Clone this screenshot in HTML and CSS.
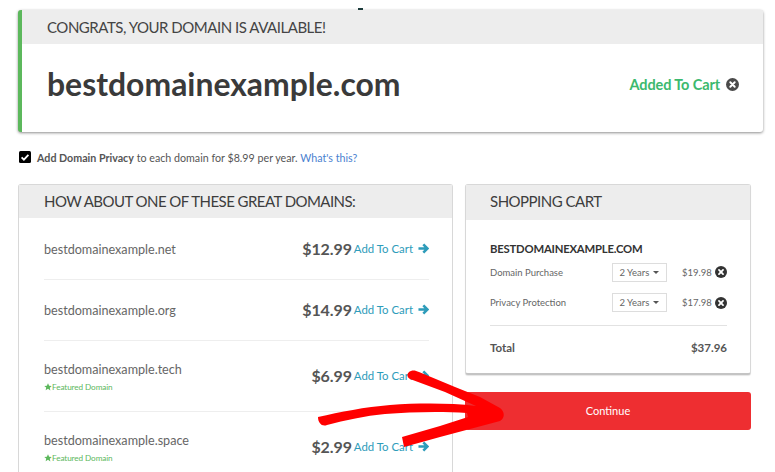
FILE: index.html
```html
<!DOCTYPE html>
<html lang="en">
<head>
<meta charset="utf-8">
<title>Domain available</title>
<link rel="stylesheet" href="styles.css">
</head>
<body>
<main class="page">
  <span class="speck"></span>
  <section class="result">
    <h2 class="result-head">CONGRATS, YOUR DOMAIN IS AVAILABLE!</h2>
    <div class="result-body">
      <h1 class="result-name">bestdomainexample.com</h1>
      <div class="added">Added To Cart
        <svg class="x-icon x-large" viewBox="0 0 16 16"><circle cx="8" cy="8" r="8" fill="#4a4a4a"/><path d="M5.3 5.3l5.4 5.4M10.7 5.3l-5.4 5.4" stroke="#fff" stroke-width="2.4" stroke-linecap="round"/></svg>
      </div>
    </div>
  </section>

  <label class="privacy">
    <svg class="check" viewBox="0 0 12 12"><rect width="12" height="12" rx="1.5" fill="#000"/><path d="M2.6 6.4l2.3 2.3 4.5-4.8" fill="none" stroke="#fff" stroke-width="1.8"/></svg>
    <span><b>Add Domain Privacy</b> to each domain for $8.99 per year. <a class="link">What's this?</a></span>
  </label>

  <div class="columns">
    <section class="panel suggestions">
      <h2 class="panel-head">HOW ABOUT ONE OF THESE GREAT DOMAINS:</h2>
      <ul class="domain-list">
        <li class="domain">
          <div class="domain-name">bestdomainexample.net</div>
          <div class="price">$12.99</div>
          <a class="add">Add To Cart <svg class="arrow" viewBox="0 0 12 12"><path d="M.5 6h9.500M5.800 1.600L10.200 6l-4.400 4.400" fill="none" stroke="#2e9cba" stroke-width="2.800"/></svg></a>
        </li>
        <li class="domain">
          <div class="domain-name">bestdomainexample.org</div>
          <div class="price">$14.99</div>
          <a class="add">Add To Cart <svg class="arrow" viewBox="0 0 12 12"><path d="M.5 6h9.500M5.800 1.600L10.200 6l-4.400 4.400" fill="none" stroke="#2e9cba" stroke-width="2.800"/></svg></a>
        </li>
        <li class="domain featured">
          <div class="domain-name">bestdomainexample.tech
            <div class="feat"><svg class="star" viewBox="0 0 12 12"><path d="M6 .5l1.700 3.600 3.900.5-2.900 2.700.8 3.900L6 8.800l-3.500 1.900.8-3.900L.4 4.600l3.900-.5z" fill="#5cb85c"/></svg>Featured Domain</div>
          </div>
          <div class="price">$6.99</div>
          <a class="add">Add To Cart <svg class="arrow" viewBox="0 0 12 12"><path d="M.5 6h9.500M5.800 1.600L10.200 6l-4.400 4.400" fill="none" stroke="#2e9cba" stroke-width="2.800"/></svg></a>
        </li>
        <li class="domain featured">
          <div class="domain-name">bestdomainexample.space
            <div class="feat"><svg class="star" viewBox="0 0 12 12"><path d="M6 .5l1.700 3.600 3.900.5-2.900 2.700.8 3.900L6 8.800l-3.500 1.900.8-3.900L.4 4.600l3.900-.5z" fill="#5cb85c"/></svg>Featured Domain</div>
          </div>
          <div class="price">$2.99</div>
          <a class="add">Add To Cart <svg class="arrow" viewBox="0 0 12 12"><path d="M.5 6h9.500M5.800 1.600L10.200 6l-4.400 4.400" fill="none" stroke="#2e9cba" stroke-width="2.800"/></svg></a>
        </li>
      </ul>
    </section>

    <aside class="side">
      <section class="panel cart">
        <h2 class="panel-head cart-head">SHOPPING CART</h2>
        <div class="cart-body">
          <h3 class="cart-domain">BESTDOMAINEXAMPLE.COM</h3>
          <div class="line">
            <span class="line-label">Domain Purchase</span>
            <span class="select">2 Years <i class="caret"></i></span>
            <span class="line-price">$19.98</span>
            <svg class="x-icon" viewBox="0 0 16 16"><circle cx="8" cy="8" r="8" fill="#333"/><path d="M5.300 5.300l5.400 5.400M10.700 5.300l-5.400 5.400" stroke="#fff" stroke-width="2.400" stroke-linecap="round"/></svg>
          </div>
          <div class="line">
            <span class="line-label">Privacy Protection</span>
            <span class="select">2 Years <i class="caret"></i></span>
            <span class="line-price">$17.98</span>
            <svg class="x-icon" viewBox="0 0 16 16"><circle cx="8" cy="8" r="8" fill="#333"/><path d="M5.300 5.300l5.400 5.400M10.700 5.300l-5.400 5.400" stroke="#fff" stroke-width="2.400" stroke-linecap="round"/></svg>
          </div>
          <div class="total"><span>Total</span><span>$37.96</span></div>
        </div>
      </section>
      <button class="continue" type="button">Continue</button>
    </aside>
  </div>

  <svg class="scribble" viewBox="0 0 775 472">
    <path fill="#f00" d="M318 417C340 412 365 407 390 405C420 403 450 403 476 406L445 392L410 379C406 377 407 372 411 371C414 370 416 371 419 372L455 387L480 397L500 408C505 412 505 418 500 421L470 429L440 437L404 447L402 437L440 426L468 417L467 413C440 411 410 412 385 414C365 416 345 420 327 425C322 427 318 423 318 417Z"/>
  </svg>
</main>
</body>
</html>
```
FILE: styles.css
```css
* { box-sizing: border-box; }
html, body { margin: 0; padding: 0; background: #fff; }
body { width: 775px; height: 472px; overflow: hidden; font-family: Lato, "Open Sans", sans-serif; color: #444; }
.page { position: relative; width: 775px; height: 472px; overflow: hidden; padding: 10px 12px 0 18px; }
.speck { position: absolute; left: 358px; top: 8px; width: 5px; height: 2px; background: #1c3b3b; }
h1, h2, h3 { margin: 0; font-weight: 400; }
ul { list-style: none; margin: 0; padding: 0; }

.result { border-left: 4px solid #5cb85c; border-radius: 3px; box-shadow: 0 1px 3px rgba(0,0,0,.45); height: 122px; background: #fff; }
.result-head { background: #ededed; height: 34px; line-height: 34px; padding-left: 25px; font-size: 15px; color: #444; letter-spacing: -.47px; }
.result-body { display: flex; align-items: center; justify-content: space-between; height: 88px; padding: 0 24px 0 25px; }
.result-name { font-size: 31.9px; font-weight: 700; color: #3a3a3a; position: relative; top: -4px; }
.added { display: flex; align-items: center; gap: 6px; color: #3cb96e; font-size: 14.5px; font-weight: 700; letter-spacing: -.12px; position: relative; top: -4px; }
.x-icon { width: 12px; height: 12px; flex: none; }
.x-large { width: 13px; height: 13px; }

.privacy { display: flex; align-items: center; gap: 6px; height: 16px; margin: 17px 0 0 1px; font-size: 10.7px; color: #555; }
.check { width: 12px; height: 12px; flex: none; }
.privacy b { font-weight: 700; color: #555; }
.link { color: #4a7fd0; }

.columns { display: grid; grid-template-columns: 435px 286px; column-gap: 12px; margin-top: 19px; align-items: start; }
.panel { background: #fff; border: 1px solid #d8d8d8; border-radius: 3px; }
.panel-head { background: #ededed; height: 33px; line-height: 33px; padding-left: 25px; font-size: 15px; color: #3d3d3d; letter-spacing: -.55px; }
.suggestions { height: 320px; border-bottom: 0; }
.domain-list { padding: 1px 23px 0 25px; }
.domain { display: flex; align-items: center; height: 61px; border-bottom: 1px solid #eee; }
.domain.featured { height: 71px; }
.domain:last-child { border-bottom: 0; }
.domain-name { flex: 1; font-size: 12.6px; color: #666; }
.featured .domain-name { padding-top: 1px; }
.feat { display: flex; align-items: center; margin-top: 5px; font-size: 8.2px; color: #5cb85c; letter-spacing: -.1px; }
.star { width: 8px; height: 8px; flex: none; }
.price { font-size: 16px; font-weight: 700; color: #555; margin-right: 2px; position: relative; top: -1px; letter-spacing: -.1px; }
.add { display: flex; align-items: center; gap: 5px; font-size: 11.4px; color: #2e9cba; position: relative; top: -1px; }
.arrow { width: 11px; height: 11px; }

.cart { height: 191px; border-bottom: 2px solid #c4c4c4; box-shadow: 0 1px 1px rgba(0,0,0,.1); }
.cart-head { padding-left: 24px; letter-spacing: -.5px; height: 35px; line-height: 33px; font-size: 15px; }
.cart-body { padding: 22px 23px 0 24px; }
.cart-domain { font-size: 11.3px; font-weight: 700; color: #333; letter-spacing: -.2px; line-height: 14px; margin-bottom: 1px; }
.line { display: flex; align-items: center; height: 30.5px; font-size: 9.5px; color: #666; }
.line-label { width: 122px; }
.select { display: flex; align-items: center; justify-content: space-between; width: 56px; height: 19px; margin-left: 1px; padding: 0 7px; border: 1px solid #ddd; font-size: 9.5px; color: #666; }
.caret { width: 0; height: 0; border-left: 3px solid transparent; border-right: 3px solid transparent; border-top: 3px solid #555; }
.line-price { margin-left: 15px; margin-right: 4px; width: 29px; }
.total { display: flex; justify-content: space-between; border-top: 1px solid #e2e2e2; margin-top: 7px; padding-top: 15px; font-size: 11.5px; font-weight: 700; color: #555; }

.continue { display: block; width: 100%; height: 38px; margin-top: 17px; padding-bottom: 2px; border: 0; border-radius: 3px; background: #ee2e31; color: #fff; font: 400 11px Lato, sans-serif; }

.scribble { position: absolute; left: 0; top: 0; width: 775px; height: 472px; pointer-events: none; }
```
